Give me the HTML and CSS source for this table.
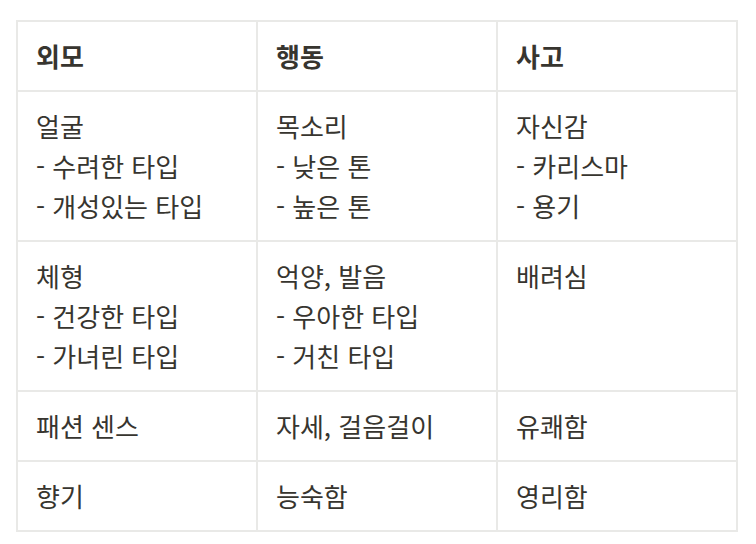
FILE: index.html
```html
<!DOCTYPE html>
<html lang="ko">
<head>
<meta charset="utf-8">
<link rel="stylesheet" href="styles.css">
</head>
<body>
<table class="grid">
  <colgroup><col class="c"><col class="c"><col class="c"></colgroup>
  <thead>
    <tr><th>외모</th><th>행동</th><th>사고</th></tr>
  </thead>
  <tbody>
    <tr class="tall"><td>얼굴<br>- 수려한 타입<br>- 개성있는 타입</td><td>목소리<br>- 낮은 톤<br>- 높은 톤</td><td>자신감<br>- 카리스마<br>- 용기</td></tr>
    <tr class="tall"><td>체형<br>- 건강한 타입<br>- 가녀린 타입</td><td>억양, 발음<br>- 우아한 타입<br>- 거친 타입</td><td>배려심</td></tr>
    <tr><td>패션 센스</td><td>자세, 걸음걸이</td><td>유쾌함</td></tr>
    <tr><td>향기</td><td>능숙함</td><td>영리함</td></tr>
  </tbody>
</table>
</body>
</html>
```

FILE: styles.css
```css
html, body {
  margin: 0;
  background: #ffffff;
}
body {
  padding: 20px 0 0 16px;
  font-family: "Noto Sans CJK KR", "Noto Sans", sans-serif;
  color: #37352f;
}
.grid {
  border-collapse: collapse;
  table-layout: fixed;
  width: 722px;
  font-size: 26px;
  line-height: 40px;
}
.c { width: 240px; }
.grid th, .grid td {
  border: 2px solid #e9e9e7;
  padding: 14px 18px;
  text-align: left;
  vertical-align: top;
}
.grid th {
  font-weight: 700;
}
.grid td {
  font-weight: 400;
}
```
